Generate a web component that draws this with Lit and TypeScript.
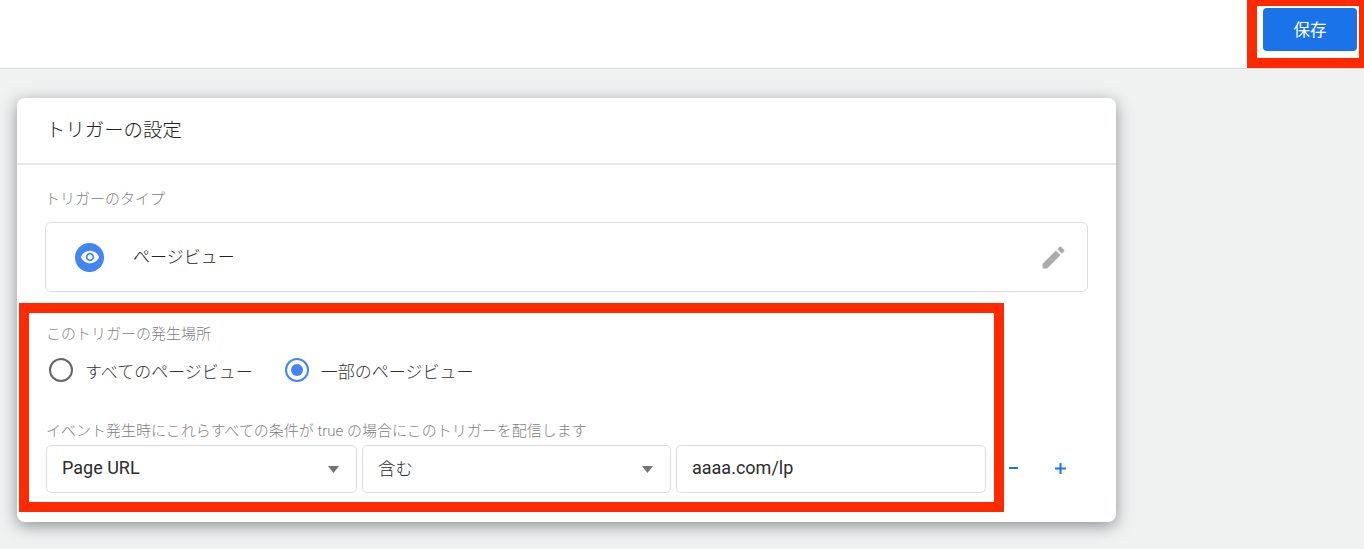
import { LitElement, html, css } from "lit";
import { customElement } from "lit/decorators.js";

@customElement("app-root")
export class AppRoot extends LitElement {
  static styles = css`
    :host {
      display: block;
      height: 549px;
      overflow: hidden;
      background: #f0f2f2;
      font-family: Roboto, "Noto Sans CJK JP", sans-serif;
      color: #212121;
    }
    .top {
      height: 68px;
      box-sizing: content-box;
      background: #fff;
      border-bottom: 1px solid #dadce0;
      display: flex;
      justify-content: flex-end;
    }
    .save-frame {
      box-sizing: border-box;
      width: 117px;
      height: 68px;
      border-style: solid;
      border-color: #ff2a00;
      border-width: 6px 5px 10px 10px;
      background: #fff;
      padding: 2px 2px 0 6px;
    }
    .save {
      box-sizing: border-box;
      display: flex;
      align-items: center;
      justify-content: center;
      height: 43px;
      padding-bottom: 2px;
      border-radius: 4px;
      background: #1a73e8;
      color: #fff;
      font-size: 16.5px;
    }
    main {
      padding: 29px 0 0 17px;
    }
    .card {
      position: relative;
      box-sizing: border-box;
      width: 1099px;
      height: 424px;
      background: #fff;
      border-radius: 8px;
      box-shadow: 0 4px 16px rgba(60, 64, 67, 0.55);
    }
    .card-head {
      box-sizing: content-box;
      height: 61px;
      padding: 0 0 4px 29px;
      display: flex;
      align-items: center;
      border-bottom: 2px solid #e8e9ea;
      font-size: 19.4px;
      font-weight: 300;
      color: #222;
    }
    .body {
      padding: 24px 28px 0;
    }
    .label {
      font-size: 15px;
      line-height: 20px;
      font-weight: 300;
      color: #808080;
    }
    .type-box {
      box-sizing: border-box;
      height: 70px;
      margin-top: 13px;
      border: 1px solid #dadce0;
      border-radius: 6px;
      padding: 0 19px 0 29px;
      display: flex;
      align-items: center;
    }
    .eye {
      width: 29px;
      height: 29px;
      border-radius: 50%;
      background: #4285f4;
      display: flex;
      align-items: center;
      justify-content: center;
    }
    .type-name {
      margin: 0 0 4px 29px;
      font-size: 17px;
      font-weight: 300;
      color: #222;
      flex: 1;
    }
    .where {
      margin: 32px 0 0 1px;
    }
    .radios {
      display: flex;
      align-items: center;
      margin: 14px 0 0 3px;
      height: 24px;
    }
    .radio {
      box-sizing: border-box;
      width: 24px;
      height: 24px;
      border-radius: 50%;
      border: 2px solid #666;
      display: flex;
      align-items: center;
      justify-content: center;
    }
    .radio.on {
      border: 2.5px solid #4285f4;
    }
    .radio.on::after {
      content: "";
      width: 12px;
      height: 12px;
      border-radius: 50%;
      background: #4285f4;
    }
    .radio-text {
      margin: 0 32px 0 12px;
      font-size: 17px;
      font-weight: 300;
      color: #333;
    }
    .cond-label {
      margin-top: 39px;
    }
    .cond {
      display: flex;
      margin-top: 4px;
    }
    .fields {
      display: grid;
      grid-template-columns: 311px 309px 310px;
      gap: 5px;
    }
    .field {
      box-sizing: border-box;
      height: 48px;
      border: 1px solid #dadce0;
      border-radius: 5px;
      padding: 0 17px 0 15px;
      display: flex;
      align-items: center;
      justify-content: space-between;
      font-size: 18px;
      color: #2b2b2b;
    }
    .field span {
      margin-bottom: 4px;
    }
    .field span.cjk {
      font-weight: 300;
      font-size: 17.5px;
    }
    .arrow {
      width: 11px;
      height: 7px;
      fill: #757575;
    }
    .ops {
      display: flex;
      margin-left: 4px;
    }
    .op {
      width: 47px;
      height: 46px;
      display: flex;
      align-items: center;
      justify-content: center;
    }
    .frame {
      position: absolute;
      left: 2px;
      top: 205px;
      width: 985px;
      height: 209px;
      box-sizing: border-box;
      border: 10px solid #ff2a00;
      pointer-events: none;
    }
  `;

  private arrow() {
    return html`<svg class="arrow" viewBox="0 0 11 7"><path d="M0 0h11L5.5 7z"></path></svg>`;
  }

  render() {
    return html`
      <div class="top">
        <div class="save-frame"><div class="save">保存</div></div>
      </div>
      <main>
        <div class="card">
          <div class="card-head">トリガーの設定</div>
          <div class="body">
            <div class="label">トリガーのタイプ</div>
            <div class="type-box">
              <div class="eye">
                <svg width="20" height="20" viewBox="0 0 24 24" fill="#fff">
                  <path d="M12 4.5C7 4.5 2.73 7.61 1 12c1.73 4.39 6 7.5 11 7.5s9.27-3.11 11-7.5c-1.73-4.39-6-7.5-11-7.5zM12 17c-2.76 0-5-2.24-5-5s2.24-5 5-5 5 2.24 5 5-2.24 5-5 5zm0-8c-1.66 0-3 1.34-3 3s1.34 3 3 3 3-1.34 3-3-1.34-3-3-3z"></path>
                </svg>
              </div>
              <div class="type-name">ページビュー</div>
              <svg width="29" height="29" viewBox="0 0 24 24" fill="#ababab">
                <path d="M3 17.25V21h3.75L17.81 9.94l-3.75-3.75L3 17.25zM20.71 7.04c.39-.39.39-1.02 0-1.41l-2.34-2.34c-.39-.39-1.02-.39-1.41 0l-1.83 1.83 3.75 3.75 1.83-1.83z"></path>
              </svg>
            </div>
            <div class="where">
              <div class="label">このトリガーの発生場所</div>
              <div class="radios">
                <div class="radio"></div>
                <div class="radio-text">すべてのページビュー</div>
                <div class="radio on"></div>
                <div class="radio-text">一部のページビュー</div>
              </div>
              <div class="label cond-label">イベント発生時にこれらすべての条件が true の場合にこのトリガーを配信します</div>
              <div class="cond">
                <div class="fields">
                  <div class="field"><span>Page URL</span>${this.arrow()}</div>
                  <div class="field"><span class="cjk">含む</span>${this.arrow()}</div>
                  <div class="field"><span>aaaa.com/lp</span></div>
                </div>
                <div class="ops">
                  <div class="op">
                    <svg width="9" height="2" viewBox="0 0 9 2" fill="#1a73e8"><path d="M0 0h9v2H0z"></path></svg>
                  </div>
                  <div class="op">
                    <svg width="11" height="11" viewBox="0 0 11 11" fill="#1a73e8"><path d="M4.500 0h2v4.500H11v2H6.500V11h-2V6.500H0v-2h4.500z"></path></svg>
                  </div>
                </div>
              </div>
            </div>
          </div>
          <div class="frame"></div>
        </div>
      </main>
    `;
  }
}
